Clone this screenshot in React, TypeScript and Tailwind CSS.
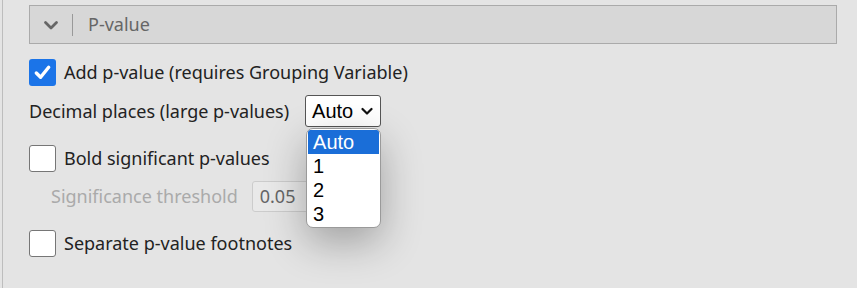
import { useState } from "react";

const Check = ({ checked }: { checked?: boolean }) =>
  checked ? (
    <span className="flex h-[27px] w-[27px] shrink-0 items-center justify-center rounded-[3px] bg-[#1b74e8]">
      <svg width="19" height="19" viewBox="0 0 20 20">
        <path d="M3.5 10.5 L8 15 L16.5 4.5" fill="none" stroke="white" strokeWidth="3.6" strokeLinecap="round" strokeLinejoin="round" />
      </svg>
    </span>
  ) : (
    <span className="h-[27px] w-[27px] shrink-0 rounded-[3px] border border-[#767676] bg-white" />
  );

const options = ["Auto", "1", "2", "3"];

export default function App() {
  const [sel] = useState("Auto");
  return (
    <div className="h-[288px] w-[857px] overflow-hidden bg-[#e4e4e4] font-['Noto_Sans',sans-serif] text-[18px] text-[#222]">
      <div className="ml-[2px] h-full border-l border-[#bdbdbd] pl-[26px] pr-[20px] pt-[5px]">
        <div className="flex h-[39px] items-center border border-[#aaaaaa] bg-[#d7d7d7]">
          <svg className="ml-[13px]" width="16" height="16" viewBox="0 0 16 16">
            <path d="M2.5 5.5 L8 11 L13.5 5.5" fill="none" stroke="#666" strokeWidth="2.8" strokeLinecap="round" strokeLinejoin="round" />
          </svg>
          <span className="ml-[13px] h-[22px] w-px bg-[#999]" />
          <span className="ml-[15px] text-[#666]">P-value</span>
        </div>

        <label className="mt-[15px] flex items-center gap-[8px]">
          <Check checked />
          <span>Add p-value (requires Grouping Variable)</span>
        </label>

        <div className="mt-[9px] flex items-center gap-[16px]">
          <span>Decimal places (large p-values)</span>
          <div className="relative">
            <div className="flex h-[32px] w-[76px] items-center rounded-[3px] border border-[#555] bg-white pl-[6px] font-['Liberation_Sans',sans-serif] text-[20px] text-black">
              <span>{sel}</span>
              <svg className="ml-[8px]" width="12" height="12" viewBox="0 0 12 12">
                <path d="M1.5 4 L6 8.5 L10.5 4" fill="none" stroke="#111" strokeWidth="2.2" strokeLinecap="round" strokeLinejoin="round" />
              </svg>
            </div>
            <ul className="absolute left-[1px] top-[33px] z-10 w-[75px] overflow-hidden rounded-[7px] border border-[#9a9a9a] bg-white py-[1px] font-['Liberation_Sans',sans-serif] text-[20px] text-black shadow-[0_14px_40px_rgba(0,0,0,0.3)]">
              {options.map((o) => (
                <li
                  key={o}
                  className={
                    o === sel
                      ? "mx-[1px] h-[24px] bg-[#1a6ed8] pl-[5px] leading-[24px] text-white"
                      : "mx-[1px] h-[24px] pl-[5px] leading-[24px]"
                  }
                >
                  {o}
                </li>
              ))}
            </ul>
          </div>
        </div>

        <label className="mt-[18px] flex items-center gap-[8px]">
          <Check />
          <span>Bold significant p-values</span>
        </label>

        <div className="mt-[9px] flex items-center gap-[14px] pl-[22px]">
          <span className="text-[#aaaaaa]">Significance threshold</span>
          <span className="flex h-[31px] w-[70px] items-center rounded-[3px] border border-[#cccccc] bg-[#e9e9e9] pl-[7px] text-[#666]">
            0.05
          </span>
        </div>

        <label className="mt-[18px] flex items-center gap-[8px]">
          <Check />
          <span>Separate p-value footnotes</span>
        </label>
      </div>
    </div>
  );
}
